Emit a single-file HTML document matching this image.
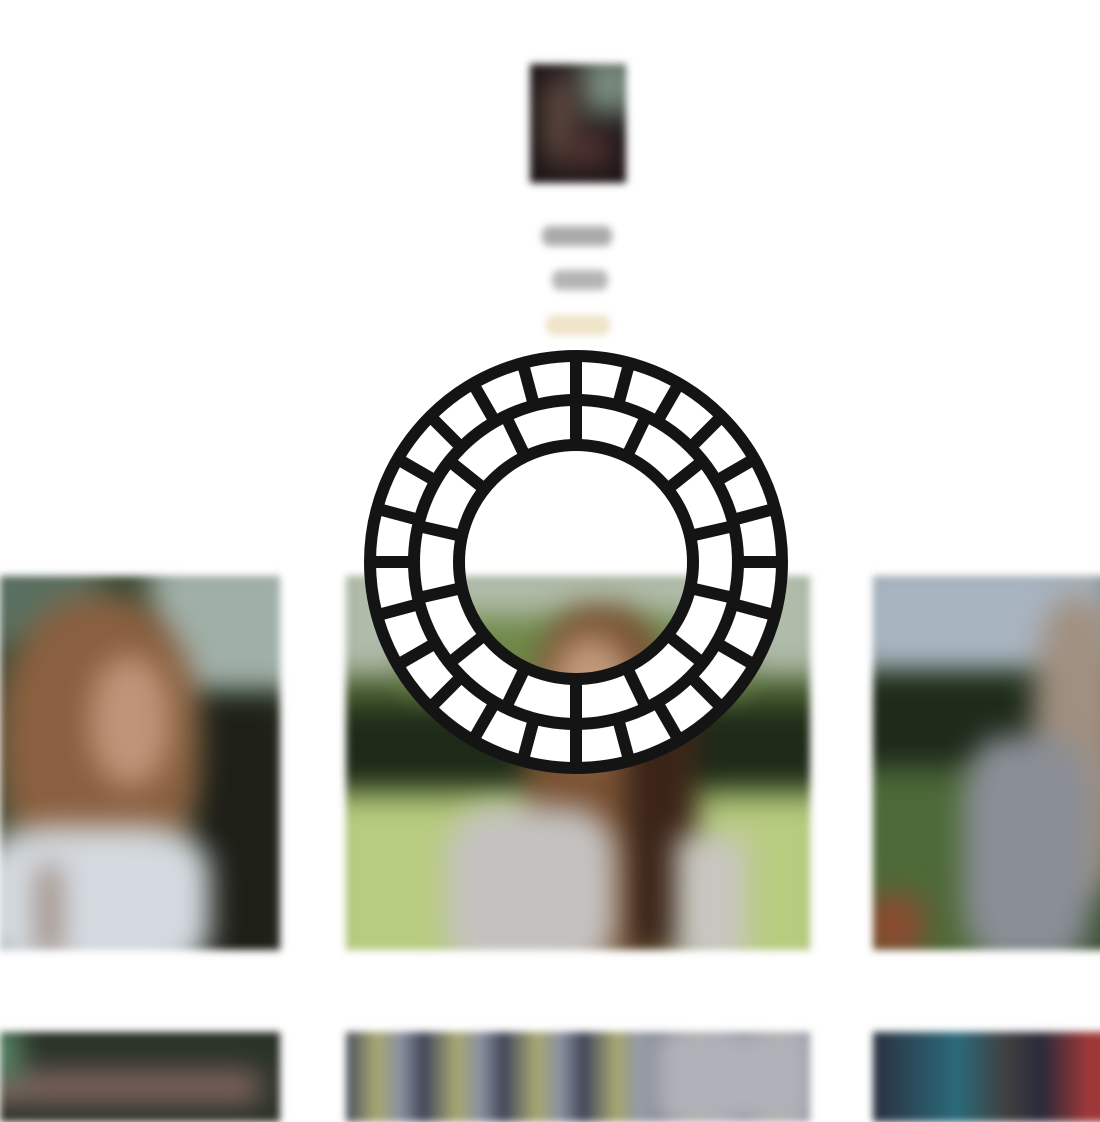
<!DOCTYPE html>
<html><head><meta charset="utf-8"><style>
html,body{margin:0;padding:0;width:1100px;height:1100px;overflow:hidden;background:#fff;font-family:"Liberation Sans",sans-serif}
.tile{position:absolute;overflow:hidden;filter:blur(4px)}
.tile div{position:absolute;filter:blur(14px)}
.t{position:absolute;border-radius:8px;filter:blur(4px)}
</style></head><body>
<div class="tile" style="left:530px;top:64px;width:96px;height:119px;background:#1e1618">
 <div style="left:50px;top:-10px;width:60px;height:60px;background:#7a8e80"></div>
 <div style="left:15px;top:10px;width:30px;height:90px;background:#6a5246;border-radius:40%"></div>
 <div style="left:40px;top:70px;width:40px;height:30px;background:#5a3a36"></div>
</div>
<div class="t" style="left:542px;top:226px;width:70px;height:20px;background:#aaa"></div>
<div class="t" style="left:552px;top:270px;width:56px;height:20px;background:#b4b4b4"></div>
<div class="t" style="left:546px;top:315px;width:64px;height:20px;background:#efe3c8"></div>

<div class="tile" style="left:0;top:576px;width:280px;height:374px;background:#3a4a36">
 <div style="left:150px;top:-20px;width:160px;height:140px;background:#a0b0a8"></div>
 <div style="left:-20px;top:-20px;width:120px;height:90px;background:#5a7060"></div>
 <div style="left:190px;top:120px;width:100px;height:280px;background:#1e2018"></div>
 <div style="left:0px;top:20px;width:200px;height:290px;background:#8a6040;border-radius:45%"></div>
 <div style="left:90px;top:80px;width:80px;height:130px;background:#c09478;border-radius:45%"></div>
 <div style="left:-20px;top:250px;width:230px;height:150px;background:#d4dae0;border-radius:30%"></div>
 <div style="left:40px;top:290px;width:18px;height:90px;background:#8a7060"></div>
</div>
<div class="tile" style="left:346px;top:576px;width:464px;height:374px;background:#4a6030">
 <div style="left:-20px;top:-20px;width:504px;height:120px;background:#b0bcaa"></div>
 <div style="left:60px;top:40px;width:340px;height:90px;background:#6e8848"></div>
 <div style="left:-20px;top:130px;width:504px;height:80px;background:#1e2a18"></div>
 <div style="left:-20px;top:220px;width:504px;height:180px;background:#b8cc80"></div>
 <div style="left:180px;top:30px;width:150px;height:360px;background:#7a5234;border-radius:40%"></div>
 <div style="left:205px;top:60px;width:80px;height:120px;background:#c0987a;border-radius:45%"></div>
 <div style="left:280px;top:130px;width:70px;height:250px;background:#3a2418"></div>
 <div style="left:100px;top:230px;width:170px;height:170px;background:#c4c2c0;border-radius:30%"></div>
 <div style="left:330px;top:260px;width:70px;height:130px;background:#c8c6c2"></div>
</div>
<div class="tile" style="left:873px;top:576px;width:240px;height:374px;background:#3a5030">
 <div style="left:-20px;top:-20px;width:260px;height:120px;background:#a8b4c0"></div>
 <div style="left:-20px;top:100px;width:260px;height:90px;background:#1e2a1a"></div>
 <div style="left:-20px;top:200px;width:160px;height:200px;background:#4e6a38"></div>
 <div style="left:160px;top:20px;width:90px;height:300px;background:#a09080;border-radius:40%"></div>
 <div style="left:90px;top:160px;width:130px;height:230px;background:#8a8e96;border-radius:30%"></div>
 <div style="left:-10px;top:320px;width:60px;height:60px;background:#8a4a30"></div>
</div>

<div class="tile" style="left:0;top:1032px;width:280px;height:90px;background:#2a3228">
 <div style="left:-20px;top:40px;width:280px;height:30px;background:#8a6a66"></div>
 <div style="left:-20px;top:-10px;width:40px;height:60px;background:#5a8a6a"></div>
</div>
<div class="tile" style="left:346px;top:1032px;width:464px;height:90px;background:repeating-linear-gradient(90deg,#4a5060 0,#a8a870 30px,#8a90a0 55px,#3a4050 80px)">
 <div style="left:300px;top:-10px;width:170px;height:110px;background:#b0b2ba"></div>
</div>
<div class="tile" style="left:873px;top:1032px;width:240px;height:90px;background:linear-gradient(90deg,#2a3040,#2a6a7a 35%,#404040 55%,#2a2a3a 70%,#a03838 90%)"></div>

<svg style="position:absolute;left:0;top:0" width="1100" height="1100" viewBox="0 0 1100 1100">
<g transform="translate(576,562)" stroke="#141414" stroke-width="12" fill="none">
<path d="M0,-207A207,207 0 1,1 0,207A207,207 0 1,1 0,-207ZM0,-117A117,117 0 1,0 0,117A117,117 0 1,0 0,-117Z" fill="#fff" stroke="none" fill-rule="evenodd"/>
<circle r="206"/><circle r="162"/><circle r="117"/>
<g id="o">
<line x1="0" y1="-162" x2="0" y2="-207"/>
<line x1="0" y1="-162" x2="0" y2="-207" transform="rotate(15)"/>
<line x1="0" y1="-162" x2="0" y2="-207" transform="rotate(30)"/>
<line x1="0" y1="-162" x2="0" y2="-207" transform="rotate(45)"/>
<line x1="0" y1="-162" x2="0" y2="-207" transform="rotate(60)"/>
<line x1="0" y1="-162" x2="0" y2="-207" transform="rotate(75)"/>
<line x1="0" y1="-162" x2="0" y2="-207" transform="rotate(90)"/>
<line x1="0" y1="-162" x2="0" y2="-207" transform="rotate(105)"/>
<line x1="0" y1="-162" x2="0" y2="-207" transform="rotate(120)"/>
<line x1="0" y1="-162" x2="0" y2="-207" transform="rotate(135)"/>
<line x1="0" y1="-162" x2="0" y2="-207" transform="rotate(150)"/>
<line x1="0" y1="-162" x2="0" y2="-207" transform="rotate(165)"/>
</g>
<use href="#o" transform="rotate(180)"/>
<line x1="0" y1="-117" x2="0" y2="-162"/>
<line x1="0" y1="-117" x2="0" y2="-162" transform="rotate(25.714)"/>
<line x1="0" y1="-117" x2="0" y2="-162" transform="rotate(51.429)"/>
<line x1="0" y1="-117" x2="0" y2="-162" transform="rotate(77.143)"/>
<line x1="0" y1="-117" x2="0" y2="-162" transform="rotate(102.857)"/>
<line x1="0" y1="-117" x2="0" y2="-162" transform="rotate(128.571)"/>
<line x1="0" y1="-117" x2="0" y2="-162" transform="rotate(154.286)"/>
<line x1="0" y1="-117" x2="0" y2="-162" transform="rotate(180)"/>
<line x1="0" y1="-117" x2="0" y2="-162" transform="rotate(205.714)"/>
<line x1="0" y1="-117" x2="0" y2="-162" transform="rotate(231.429)"/>
<line x1="0" y1="-117" x2="0" y2="-162" transform="rotate(257.143)"/>
<line x1="0" y1="-117" x2="0" y2="-162" transform="rotate(282.857)"/>
<line x1="0" y1="-117" x2="0" y2="-162" transform="rotate(308.571)"/>
<line x1="0" y1="-117" x2="0" y2="-162" transform="rotate(334.286)"/>
</g>
</svg>
</body></html>
